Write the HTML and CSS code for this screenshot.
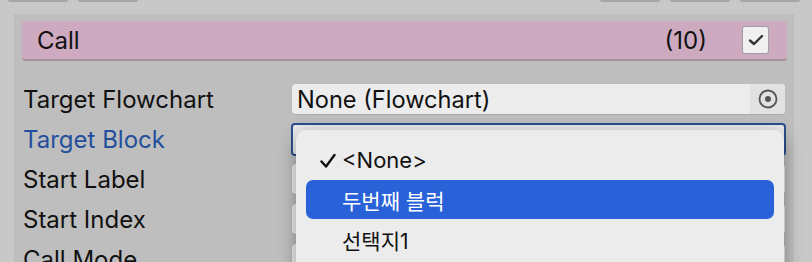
FILE: index.html
```html
<!DOCTYPE html>
<html lang="en">
<head>
    <meta charset="UTF-8">
    <meta name="viewport" content="width=device-width, initial-scale=1.0">
    <title>Call Inspector</title>
    <link rel="stylesheet" href="styles.css">
</head>
<body>
    <div class="toolbar">
        <div class="tool-group">
            <span class="tool-btn"></span>
            <span class="tool-btn"></span>
        </div>
        <div class="tool-group">
            <span class="tool-btn"></span>
            <span class="tool-btn"></span>
            <span class="tool-btn"></span>
        </div>
    </div>

    <div class="panel">
        <div class="command-header">
            <span class="command-name">Call</span>
            <span class="command-index">(10)</span>
            <span class="checkbox">
                <svg width="16" height="14" viewBox="0 0 16 14"><path d="M2 7.5 L6 11 L14 3" fill="none" stroke="#333" stroke-width="2.4" stroke-linecap="round" stroke-linejoin="round"/></svg>
            </span>
        </div>

        <div class="props">
            <div class="prop-row">
                <span class="prop-label">Target Flowchart</span>
                <div class="field object-field">
                    <span class="field-text">None (Flowchart)</span>
                    <span class="picker">
                        <svg width="22" height="22" viewBox="0 0 22 22"><circle cx="11" cy="11" r="8.5" fill="none" stroke="#555" stroke-width="1.8"/><circle cx="11" cy="11" r="3" fill="#555"/></svg>
                    </span>
                </div>
            </div>
            <div class="prop-row">
                <span class="prop-label active">Target Block</span>
                <div class="field focused"></div>
            </div>
            <div class="prop-row">
                <span class="prop-label">Start Label</span>
                <div class="field"></div>
            </div>
            <div class="prop-row">
                <span class="prop-label">Start Index</span>
                <div class="field"></div>
            </div>
            <div class="prop-row">
                <span class="prop-label">Call Mode</span>
                <div class="field"></div>
            </div>
        </div>
    </div>

    <!-- Block popup menu -->
    <div class="popup-menu">
        <div class="menu-item">
            <svg class="tick" width="16" height="16" viewBox="0 0 16 16"><path d="M1.5 8.5 L6 13.5 L14.5 2" fill="none" stroke="#111" stroke-width="2.4" stroke-linecap="round" stroke-linejoin="round"/></svg>
            &lt;None&gt;
        </div>
        <div class="menu-item selected">두번째 블럭</div>
        <div class="menu-item">선택지1</div>
    </div>
</body>
</html>
```

FILE: styles.css
```css
body {
    margin: 0;
    padding: 0;
    background: #c8c8c8;
    font-family: Inter, "Noto Sans CJK KR", sans-serif;
    font-size: 24px;
    color: #111;
    overflow: hidden;
}
.toolbar {
    height: 14px;
    display: flex;
    justify-content: space-between;
    padding: 0 12px 0 8px;
}
.tool-group {
    display: flex;
    gap: 10px;
}
.tool-btn {
    display: block;
    width: 60px;
    height: 2px;
    background: #a6a6a6;
    border-radius: 0 0 4px 4px;
}
.panel {
    margin-left: 14px;
    width: 780px;
    height: 260px;
    background: #bebebe;
    padding: 7px 7px 0 8px;
    box-sizing: border-box;
}
.command-header {
    height: 40px;
    box-sizing: border-box;
    background: #cdaabf;
    border-bottom: 2px solid #a8919f;
    border-radius: 3px;
    display: flex;
    align-items: center;
    padding: 0 18px 0 15px;
}
.command-name {
    flex: 1;
}
.command-index {
    margin-right: 35px;
}
.checkbox {
    width: 25px;
    height: 26px;
    background: #f0f0f0;
    border: 1px solid #a0a0a0;
    border-radius: 3px;
    display: flex;
    align-items: center;
    justify-content: center;
}
.props {
    margin: 23px 2px 0 1px;
    display: flex;
    flex-direction: column;
    gap: 9px;
}
.prop-row {
    display: flex;
    align-items: center;
    height: 31px;
}
.prop-label {
    width: 269px;
    flex-shrink: 0;
}
.prop-label.active {
    color: #234f9c;
}
.field {
    flex: 1;
    height: 31px;
    box-sizing: border-box;
    background: #ececec;
    border-radius: 4px;
    border-bottom: 1px solid #a9a9a9;
    display: flex;
    align-items: center;
}
.field.focused {
    margin-left: -1px;
    margin-right: -1px;
    height: 33px;
    border: 2px solid #2c4f8e;
}
.field-text {
    flex: 1;
    padding-left: 5px;
    font-size: 23.6px;
}
.picker {
    width: 35px;
    height: 100%;
    background: #e2e2e2;
    border-radius: 0 4px 4px 0;
    display: flex;
    align-items: center;
    justify-content: center;
}
.popup-menu {
    position: absolute;
    left: 296px;
    top: 130px;
    width: 488px;
    height: 160px;
    box-sizing: border-box;
    background: #ececec;
    border-radius: 10px;
    box-shadow: 0 4px 18px rgba(0, 0, 0, 0.35);
    padding: 10px 10px 0;
    font-size: 22px;
}
.menu-item {
    height: 40px;
    display: flex;
    align-items: center;
    padding-left: 36px;
    position: relative;
    border-radius: 7px;
}
.menu-item .tick {
    position: absolute;
    left: 14px;
    top: 13px;
}
.menu-item.selected {
    height: 39px;
    margin-bottom: 1px;
    background: #2962d8;
    color: #fff;
    font-size: 21px;
}
.menu-item:last-child {
    font-size: 21px;
}
```
